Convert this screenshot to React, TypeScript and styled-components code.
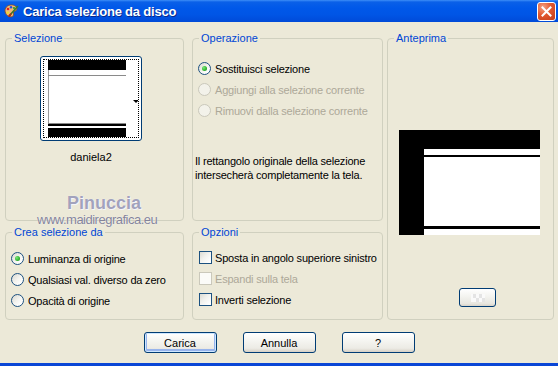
import styled, { createGlobalStyle } from 'styled-components';

const GlobalStyle = createGlobalStyle`
  html, body {
    margin: 0;
    padding: 0;
    background: #ece9d8;
  }
  body {
    font-family: "Liberation Sans", Arial, sans-serif;
    font-size: 11px;
    color: #000;
  }
  * {
    box-sizing: border-box;
  }
`;

const Window = styled.div`
  position: relative;
  width: 558px;
  height: 366px;
  display: flex;
  flex-direction: column;
  background: #ece9d8;
  border-bottom: 3px solid #0a46d6;
  overflow: hidden;
`;

const TitleBar = styled.div`
  flex: none;
  height: 22px;
  display: flex;
  align-items: center;
  padding: 0 2px 0 3px;
  background: linear-gradient(180deg, #3d8ef7 0px, #0a60e8 2px, #0058e9 8px, #0055e5 15px, #004ad8 22px);
`;

const Title = styled.span`
  flex: 1;
  margin-left: 4px;
  color: #fff;
  font-weight: bold;
  font-size: 13px;
  letter-spacing: -0.2px;
  text-shadow: 1px 1px 0 #0a2a8c;
`;

const CloseButton = styled.div`
  width: 19px;
  height: 19px;
  margin-top: 1px;
  border: 1px solid #fff;
  border-radius: 3px;
  display: flex;
  align-items: center;
  justify-content: center;
  background: radial-gradient(circle at 30% 25%, #f4a283 0%, #e2582f 45%, #c23c1a 100%);
`;

const Panels = styled.div`
  display: flex;
  padding: 10px 4px 0 5px;
`;

const Column = styled.div<{ $w: number; $ml?: number }>`
  width: ${(p) => p.$w}px;
  margin-left: ${(p) => p.$ml ?? 0}px;
  display: flex;
  flex-direction: column;
  gap: 5px;
`;

const GroupBox = styled.fieldset<{ $h: number }>`
  margin: 0;
  padding: 0;
  min-width: 0;
  height: ${(p) => p.$h}px;
  border: 1px solid #d0d0bf;
  border-radius: 4px;
  display: flex;
  flex-direction: column;
`;

const Legend = styled.legend`
  margin-left: 6px;
  padding: 0 2px;
  color: #0046d5;
  font-size: 11px;
  line-height: 12px;
`;

const SelectionBody = styled.div`
  display: flex;
  flex-direction: column;
  align-items: center;
  padding: 12px 7px 0 0;
`;

const ThumbButton = styled.div`
  width: 102px;
  height: 85px;
  padding: 2px;
  border: 1px solid #003c74;
  border-radius: 3px;
  background: #fff;
  display: flex;
`;

const FocusRing = styled.div`
  flex: 1;
  border: 1px dotted #000;
  display: flex;
`;

const ThumbName = styled.div`
  margin-top: 10px;
  line-height: 13px;
`;

const OptionList = styled.div<{ $pt: number; $pl: number }>`
  display: flex;
  flex-direction: column;
  padding: ${(p) => p.$pt}px 0 0 ${(p) => p.$pl}px;
`;

const OptionRow = styled.label<{ $disabled?: boolean; $gap?: number }>`
  height: 21px;
  display: flex;
  align-items: center;
  gap: ${(p) => p.$gap ?? 4}px;
  white-space: nowrap;
  letter-spacing: -0.2px;
  color: ${(p) => (p.$disabled ? '#aca899' : '#000')};
`;

const Radio = styled.span<{ $checked?: boolean; $disabled?: boolean }>`
  flex: none;
  width: 13px;
  height: 13px;
  border-radius: 50%;
  border: 1px solid ${(p) => (p.$disabled ? '#cac8bb' : '#1c5180')};
  background: ${(p) =>
    p.$disabled ? '#f3f2ea' : 'linear-gradient(135deg, #d8d7cf 0%, #f4f4f0 50%, #ffffff 85%)'};
  display: flex;
  align-items: center;
  justify-content: center;

  &::after {
    content: '';
    display: ${(p) => (p.$checked ? 'block' : 'none')};
    width: 5px;
    height: 5px;
    border-radius: 50%;
    background: radial-gradient(circle at 35% 35%, #7ae87a 0%, #2fb22f 60%, #1a8c1a 100%);
  }
`;

const Checkbox = styled.span<{ $disabled?: boolean }>`
  flex: none;
  width: 13px;
  height: 13px;
  border: 1px solid ${(p) => (p.$disabled ? '#cac8bb' : '#1c5180')};
  background: ${(p) =>
    p.$disabled ? '#fbfbf8' : 'linear-gradient(135deg, #dcdbd3 0%, #f2f2ee 45%, #ffffff 90%)'};
`;

const Note = styled.p`
  margin: 33px 0 0 2px;
  line-height: 14px;
  letter-spacing: -0.2px;
`;

const PreviewBody = styled.div`
  display: flex;
  flex-direction: column;
  align-items: flex-start;
  padding-left: 11px;
`;

const PreviewImage = styled.svg`
  display: block;
  margin-top: 86px;
`;

const ZoomButton = styled.div`
  width: 37px;
  height: 19px;
  margin: 53px 0 0 60px;
  border: 1px solid #003c74;
  border-radius: 3px;
  background: linear-gradient(180deg, #ffffff 0%, #f3f3ef 45%, #e8e7e0 85%, #d8d3c8 100%);
  display: flex;
  align-items: center;
  justify-content: center;
`;

const ButtonRow = styled.div`
  display: flex;
  justify-content: center;
  gap: 26px;
  margin-top: 12px;
`;

const PushButton = styled.button<{ $default?: boolean }>`
  width: 73px;
  height: 21px;
  padding: 0;
  border: 1px solid #003c74;
  border-radius: 3px;
  font-family: "Liberation Sans", Arial, sans-serif;
  font-size: 11px;
  color: #000;
  background: linear-gradient(180deg, #ffffff 0%, #f5f5f1 40%, #ecebe5 80%, #d6d0c5 100%);
  box-shadow: ${(p) =>
    p.$default ? 'inset 0 0 0 1px #cee7ff, inset 0 -1px 0 2px #98b4ec' : 'none'};
`;

const WatermarkName = styled.div`
  position: absolute;
  left: 67px;
  top: 193px;
  font-size: 18px;
  line-height: 20px;
  font-weight: bold;
  color: #a2a2bc;
  text-shadow: 0 0 1px #fff, 1px 1px 0 #f4f4fa;
  pointer-events: none;
`;

const WatermarkSite = styled.div`
  position: absolute;
  left: 37px;
  top: 214px;
  font-size: 13px;
  line-height: 11px;
  letter-spacing: -0.5px;
  color: #84849a;
  text-shadow: 0 0 1px #fff;
  pointer-events: none;
`;

const AppIcon = () => (
  <svg width="16" height="16" viewBox="0 0 16 16">
    <path d="M2 8 C2 3.5 6 1.5 9.5 2 C13 2.5 14.5 5 13.5 7 C12.8 8.3 11 8 10.5 9 C10 10.2 11.2 11.5 10 13 C8.5 14.8 3 14 2 8 Z" fill="#f0b878" stroke="#8a4a1c" strokeWidth="0.8" />
    <circle cx="5" cy="6" r="1.3" fill="#e02020" />
    <circle cx="8" cy="4.3" r="1.2" fill="#2050e0" />
    <circle cx="11" cy="5" r="1.1" fill="#20a030" />
    <circle cx="4.8" cy="9.6" r="1.2" fill="#f0e020" />
    <path d="M7 12 L14.5 3.5" stroke="#3a7a2a" strokeWidth="1.6" strokeLinecap="round" />
    <path d="M6.2 13 L7.6 11.4" stroke="#b03010" strokeWidth="2" strokeLinecap="round" />
  </svg>
);

const CloseIcon = () => (
  <svg width="11" height="11" viewBox="0 0 11 11">
    <path d="M1.5 1.5 L9.5 9.5 M9.5 1.5 L1.5 9.5" stroke="#fff" strokeWidth="2" strokeLinecap="square" />
  </svg>
);

const Thumbnail = () => (
  <svg width="94" height="77" viewBox="0 0 94 77">
    <rect x="4" y="0" width="78" height="77" fill="#fff" />
    <rect x="4" y="0" width="78" height="10" fill="#000" />
    <rect x="4" y="10" width="1" height="54" fill="#9a9a9a" />
    <rect x="4" y="15" width="78" height="1" fill="#8a8a8a" />
    <rect x="4" y="63" width="78" height="1" fill="#8a8a8a" />
    <rect x="4" y="64" width="78" height="2" fill="#000" />
    <rect x="4" y="68" width="78" height="9" fill="#000" />
    <polygon points="89,40 95,40 92,43" fill="#000" />
  </svg>
);

const Preview = () => (
  <PreviewImage width="141" height="105" viewBox="0 0 141 105">
    <rect x="0" y="0" width="141" height="105" fill="#000" />
    <rect x="25" y="19" width="116" height="86" fill="#fff" />
    <rect x="25" y="25" width="116" height="2" fill="#000" />
    <rect x="25" y="96" width="116" height="3" fill="#000" />
  </PreviewImage>
);

const Checker = () => (
  <svg width="14" height="8" viewBox="0 0 14 8">
    <rect x="0" y="0" width="14" height="8" fill="#fafafa" />
    <rect x="2" y="0" width="3" height="4" fill="#e4e4e4" />
    <rect x="8" y="0" width="3" height="4" fill="#e4e4e4" />
    <rect x="5" y="4" width="3" height="4" fill="#e4e4e4" />
    <rect x="11" y="4" width="3" height="4" fill="#e4e4e4" />
  </svg>
);

export default function App() {
  return (
    <>
      <GlobalStyle />
      <Window>
        <TitleBar>
          <AppIcon />
          <Title>Carica selezione da disco</Title>
          <CloseButton>
            <CloseIcon />
          </CloseButton>
        </TitleBar>

        <Panels>
          <Column $w={179}>
            <GroupBox $h={189}>
              <Legend>Selezione</Legend>
              <SelectionBody>
                <ThumbButton>
                  <FocusRing>
                    <Thumbnail />
                  </FocusRing>
                </ThumbButton>
                <ThumbName>daniela2</ThumbName>
              </SelectionBody>
            </GroupBox>
            <GroupBox $h={94}>
              <Legend>Crea selezione da</Legend>
              <OptionList $pt={10} $pl={5}>
                <OptionRow>
                  <Radio $checked />
                  Luminanza di origine
                </OptionRow>
                <OptionRow>
                  <Radio />
                  Qualsiasi val. diverso da zero
                </OptionRow>
                <OptionRow>
                  <Radio />
                  Opacità di origine
                </OptionRow>
              </OptionList>
            </GroupBox>
          </Column>

          <Column $w={191} $ml={8}>
            <GroupBox $h={189}>
              <Legend>Operazione</Legend>
              <OptionList $pt={14} $pl={5}>
                <OptionRow>
                  <Radio $checked />
                  Sostituisci selezione
                </OptionRow>
                <OptionRow $disabled>
                  <Radio $disabled />
                  Aggiungi alla selezione corrente
                </OptionRow>
                <OptionRow $disabled>
                  <Radio $disabled />
                  Rimuovi dalla selezione corrente
                </OptionRow>
              </OptionList>
              <Note>
                Il rettangolo originale della selezione
                <br />
                intersecherà completamente la tela.
              </Note>
            </GroupBox>
            <GroupBox $h={94}>
              <Legend>Opzioni</Legend>
              <OptionList $pt={9} $pl={6}>
                <OptionRow $gap={3}>
                  <Checkbox />
                  Sposta in angolo superiore sinistro
                </OptionRow>
                <OptionRow $gap={3} $disabled>
                  <Checkbox $disabled />
                  Espandi sulla tela
                </OptionRow>
                <OptionRow $gap={3}>
                  <Checkbox />
                  Inverti selezione
                </OptionRow>
              </OptionList>
            </GroupBox>
          </Column>

          <Column $w={167} $ml={4}>
            <GroupBox $h={288}>
              <Legend>Anteprima</Legend>
              <PreviewBody>
                <Preview />
                <ZoomButton>
                  <Checker />
                </ZoomButton>
              </PreviewBody>
            </GroupBox>
          </Column>
        </Panels>

        <ButtonRow>
          <PushButton $default>Carica</PushButton>
          <PushButton>Annulla</PushButton>
          <PushButton>?</PushButton>
        </ButtonRow>

        <WatermarkName>Pinuccia</WatermarkName>
        <WatermarkSite>www.maidiregrafica.eu</WatermarkSite>
      </Window>
    </>
  );
}
